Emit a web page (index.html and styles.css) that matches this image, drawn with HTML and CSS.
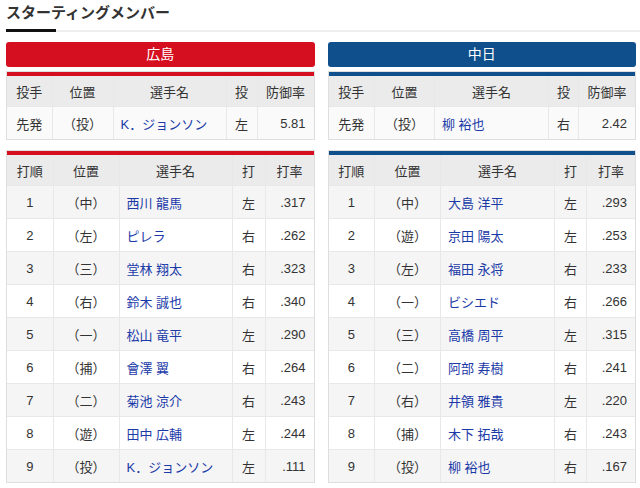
FILE: index.html
```html
<!DOCTYPE html>
<html lang="ja">
<head>
  <meta charset="UTF-8">
  <meta name="viewport" content="width=device-width, initial-scale=1.0">
  <title>スターティングメンバー</title>
  <link rel="stylesheet" href="styles.css">
</head>
<body>
  <div class="page">
    <h2 class="section-title">スターティングメンバー</h2>
    <div class="teams">
      <div class="team carp">
        <div class="team-name">広島</div>
        <div class="table-box">
          <table class="pitcher">
            <colgroup><col style="width:45px"><col style="width:61px"><col style="width:113px"><col style="width:31px"><col></colgroup>
            <tr><th>投手</th><th>位置</th><th>選手名</th><th>投</th><th>防御率</th></tr>
            <tr><td>先発</td><td>（投）</td><td class="name"><a>K．ジョンソン</a></td><td>左</td><td class="num">5.81</td></tr>
          </table>
        </div>
        <div class="table-box">
          <table class="lineup">
            <colgroup><col style="width:46px"><col style="width:66px"><col style="width:113px"><col style="width:33px"><col></colgroup>
            <tr><th>打順</th><th>位置</th><th>選手名</th><th>打</th><th>打率</th></tr>
            <tr><td>1</td><td>（中）</td><td class="name"><a>西川 龍馬</a></td><td>左</td><td class="num">.317</td></tr>
            <tr><td>2</td><td>（左）</td><td class="name"><a>ピレラ</a></td><td>右</td><td class="num">.262</td></tr>
            <tr><td>3</td><td>（三）</td><td class="name"><a>堂林 翔太</a></td><td>右</td><td class="num">.323</td></tr>
            <tr><td>4</td><td>（右）</td><td class="name"><a>鈴木 誠也</a></td><td>右</td><td class="num">.340</td></tr>
            <tr><td>5</td><td>（一）</td><td class="name"><a>松山 竜平</a></td><td>左</td><td class="num">.290</td></tr>
            <tr><td>6</td><td>（捕）</td><td class="name"><a>會澤 翼</a></td><td>右</td><td class="num">.264</td></tr>
            <tr><td>7</td><td>（二）</td><td class="name"><a>菊池 涼介</a></td><td>右</td><td class="num">.243</td></tr>
            <tr><td>8</td><td>（遊）</td><td class="name"><a>田中 広輔</a></td><td>左</td><td class="num">.244</td></tr>
            <tr><td>9</td><td>（投）</td><td class="name"><a>K．ジョンソン</a></td><td>左</td><td class="num">.111</td></tr>
          </table>
        </div>
      </div>
      <div class="team dragons">
        <div class="team-name">中日</div>
        <div class="table-box">
          <table class="pitcher">
            <colgroup><col style="width:46px"><col style="width:60px"><col style="width:114px"><col style="width:30px"><col></colgroup>
            <tr><th>投手</th><th>位置</th><th>選手名</th><th>投</th><th>防御率</th></tr>
            <tr><td>先発</td><td>（投）</td><td class="name"><a>柳 裕也</a></td><td>右</td><td class="num">2.42</td></tr>
          </table>
        </div>
        <div class="table-box">
          <table class="lineup">
            <colgroup><col style="width:46px"><col style="width:66px"><col style="width:114px"><col style="width:32px"><col></colgroup>
            <tr><th>打順</th><th>位置</th><th>選手名</th><th>打</th><th>打率</th></tr>
            <tr><td>1</td><td>（中）</td><td class="name"><a>大島 洋平</a></td><td>左</td><td class="num">.293</td></tr>
            <tr><td>2</td><td>（遊）</td><td class="name"><a>京田 陽太</a></td><td>左</td><td class="num">.253</td></tr>
            <tr><td>3</td><td>（左）</td><td class="name"><a>福田 永将</a></td><td>右</td><td class="num">.233</td></tr>
            <tr><td>4</td><td>（一）</td><td class="name"><a>ビシエド</a></td><td>右</td><td class="num">.266</td></tr>
            <tr><td>5</td><td>（三）</td><td class="name"><a>高橋 周平</a></td><td>左</td><td class="num">.315</td></tr>
            <tr><td>6</td><td>（二）</td><td class="name"><a>阿部 寿樹</a></td><td>右</td><td class="num">.241</td></tr>
            <tr><td>7</td><td>（右）</td><td class="name"><a>井領 雅貴</a></td><td>左</td><td class="num">.220</td></tr>
            <tr><td>8</td><td>（捕）</td><td class="name"><a>木下 拓哉</a></td><td>右</td><td class="num">.243</td></tr>
            <tr><td>9</td><td>（投）</td><td class="name"><a>柳 裕也</a></td><td>右</td><td class="num">.167</td></tr>
          </table>
        </div>
      </div>
    </div>
  </div>
</body>
</html>
```

FILE: styles.css
```css
body {
  margin: 0;
  background: #fff;
  color: #333;
  font-family: "Liberation Sans", "Noto Sans CJK JP", sans-serif;
  font-size: 13px;
}

.page {
  padding: 0 4px 0 6px;
}

.section-title {
  margin: 0 -4px 0 0;
  padding-top: 3px;
  height: 32px;
  box-sizing: border-box;
  font-size: 15px;
  font-weight: bold;
  line-height: 20px;
  color: #333;
  position: relative;
  border-bottom: 2px solid #eee;
}

.section-title::after {
  content: "";
  position: absolute;
  left: 0;
  bottom: -2px;
  width: 50px;
  height: 3px;
  background: #111;
}

.teams {
  display: grid;
  grid-template-columns: 1fr 1fr;
  gap: 13px;
  margin-top: 10px;
}

.team-name {
  height: 25px;
  line-height: 25px;
  border-radius: 3px;
  color: #fff;
  text-align: center;
  font-size: 14px;
  margin-bottom: 4px;
}

.carp .team-name { background: #d50f20; }
.dragons .team-name { background: #0e4f8c; }

.table-box {
  border: 1px solid #dedede;
  margin-bottom: 10px;
}

.carp table { border-top: 4px solid #d50f20; }
.dragons table { border-top: 4px solid #0e4f8c; }

table {
  width: 100%;
  border-collapse: collapse;
  table-layout: fixed;
  font-size: 13px;
}

th, td {
  padding: 0;
  text-align: center;
  font-weight: normal;
  border-left: 1px solid #e8e8e8;
  white-space: nowrap;
}

th:first-child, td:first-child {
  border-left: none;
}

th {
  height: 30px;
  background: #ebebeb;
}

td {
  height: 32px;
  border-top: 1px solid #e8e8e8;
}

.pitcher td {
  background: #fafafa;
}

.lineup tr:nth-child(even) td { background: #f5f5f5; }
.lineup tr:nth-child(odd) td { background: #fff; }

td.name {
  text-align: left;
  padding-left: 7px;
}

td.name a {
  color: #1b3aa8;
  text-decoration: none;
}

td.num {
  text-align: right;
  padding-right: 8px;
}
```
